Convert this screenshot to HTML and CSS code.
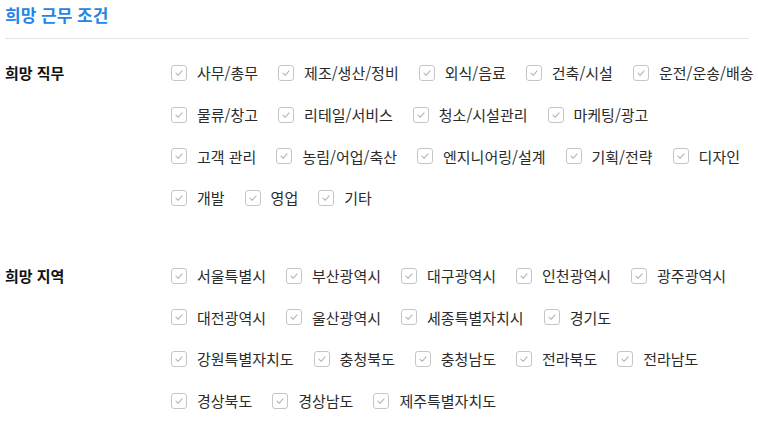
FILE: index.html
```html
<!DOCTYPE html>
<html lang="ko">
<head>
<meta charset="utf-8">
<link rel="stylesheet" href="styles.css">
</head>
<body>
<div class="page">
  <h2 class="title">희망 근무 조건</h2>
  <div class="divider"></div>

  <section class="field">
    <div class="label">희망 직무</div>
    <div class="options">
      <div class="row">
        <label class="opt"><span class="box"><svg viewBox="0 0 16 16"><polyline points="4.5,8.2 7,10.6 11.5,5.6"/></svg></span>사무/총무</label>
        <label class="opt"><span class="box"><svg viewBox="0 0 16 16"><polyline points="4.5,8.2 7,10.6 11.5,5.6"/></svg></span>제조/생산/정비</label>
        <label class="opt"><span class="box"><svg viewBox="0 0 16 16"><polyline points="4.5,8.2 7,10.6 11.5,5.6"/></svg></span>외식/음료</label>
        <label class="opt"><span class="box"><svg viewBox="0 0 16 16"><polyline points="4.5,8.2 7,10.6 11.5,5.6"/></svg></span>건축/시설</label>
        <label class="opt"><span class="box"><svg viewBox="0 0 16 16"><polyline points="4.5,8.2 7,10.6 11.5,5.6"/></svg></span>운전/운송/배송</label>
      </div>
      <div class="row">
        <label class="opt"><span class="box"><svg viewBox="0 0 16 16"><polyline points="4.5,8.2 7,10.6 11.5,5.6"/></svg></span>물류/창고</label>
        <label class="opt"><span class="box"><svg viewBox="0 0 16 16"><polyline points="4.5,8.2 7,10.6 11.5,5.6"/></svg></span>리테일/서비스</label>
        <label class="opt"><span class="box"><svg viewBox="0 0 16 16"><polyline points="4.5,8.2 7,10.6 11.5,5.6"/></svg></span>청소/시설관리</label>
        <label class="opt"><span class="box"><svg viewBox="0 0 16 16"><polyline points="4.5,8.2 7,10.6 11.5,5.6"/></svg></span>마케팅/광고</label>
      </div>
      <div class="row">
        <label class="opt"><span class="box"><svg viewBox="0 0 16 16"><polyline points="4.5,8.2 7,10.6 11.5,5.6"/></svg></span>고객 관리</label>
        <label class="opt"><span class="box"><svg viewBox="0 0 16 16"><polyline points="4.5,8.2 7,10.6 11.5,5.6"/></svg></span>농림/어업/축산</label>
        <label class="opt"><span class="box"><svg viewBox="0 0 16 16"><polyline points="4.5,8.2 7,10.6 11.5,5.6"/></svg></span>엔지니어링/설계</label>
        <label class="opt"><span class="box"><svg viewBox="0 0 16 16"><polyline points="4.5,8.2 7,10.6 11.5,5.6"/></svg></span>기획/전략</label>
        <label class="opt"><span class="box"><svg viewBox="0 0 16 16"><polyline points="4.5,8.2 7,10.6 11.5,5.6"/></svg></span>디자인</label>
      </div>
      <div class="row">
        <label class="opt"><span class="box"><svg viewBox="0 0 16 16"><polyline points="4.5,8.2 7,10.6 11.5,5.6"/></svg></span>개발</label>
        <label class="opt"><span class="box"><svg viewBox="0 0 16 16"><polyline points="4.5,8.2 7,10.6 11.5,5.6"/></svg></span>영업</label>
        <label class="opt"><span class="box"><svg viewBox="0 0 16 16"><polyline points="4.5,8.2 7,10.6 11.5,5.6"/></svg></span>기타</label>
      </div>
    </div>
  </section>

  <section class="field">
    <div class="label">희망 지역</div>
    <div class="options">
      <div class="row">
        <label class="opt"><span class="box"><svg viewBox="0 0 16 16"><polyline points="4.5,8.2 7,10.6 11.5,5.6"/></svg></span>서울특별시</label>
        <label class="opt"><span class="box"><svg viewBox="0 0 16 16"><polyline points="4.5,8.2 7,10.6 11.5,5.6"/></svg></span>부산광역시</label>
        <label class="opt"><span class="box"><svg viewBox="0 0 16 16"><polyline points="4.5,8.2 7,10.6 11.5,5.6"/></svg></span>대구광역시</label>
        <label class="opt"><span class="box"><svg viewBox="0 0 16 16"><polyline points="4.5,8.2 7,10.6 11.5,5.6"/></svg></span>인천광역시</label>
        <label class="opt"><span class="box"><svg viewBox="0 0 16 16"><polyline points="4.5,8.2 7,10.6 11.5,5.6"/></svg></span>광주광역시</label>
      </div>
      <div class="row">
        <label class="opt"><span class="box"><svg viewBox="0 0 16 16"><polyline points="4.5,8.2 7,10.6 11.5,5.6"/></svg></span>대전광역시</label>
        <label class="opt"><span class="box"><svg viewBox="0 0 16 16"><polyline points="4.5,8.2 7,10.6 11.5,5.6"/></svg></span>울산광역시</label>
        <label class="opt"><span class="box"><svg viewBox="0 0 16 16"><polyline points="4.5,8.2 7,10.6 11.5,5.6"/></svg></span>세종특별자치시</label>
        <label class="opt"><span class="box"><svg viewBox="0 0 16 16"><polyline points="4.5,8.2 7,10.6 11.5,5.6"/></svg></span>경기도</label>
      </div>
      <div class="row">
        <label class="opt"><span class="box"><svg viewBox="0 0 16 16"><polyline points="4.5,8.2 7,10.6 11.5,5.6"/></svg></span>강원특별자치도</label>
        <label class="opt"><span class="box"><svg viewBox="0 0 16 16"><polyline points="4.5,8.2 7,10.6 11.5,5.6"/></svg></span>충청북도</label>
        <label class="opt"><span class="box"><svg viewBox="0 0 16 16"><polyline points="4.5,8.2 7,10.6 11.5,5.6"/></svg></span>충청남도</label>
        <label class="opt"><span class="box"><svg viewBox="0 0 16 16"><polyline points="4.5,8.2 7,10.6 11.5,5.6"/></svg></span>전라북도</label>
        <label class="opt"><span class="box"><svg viewBox="0 0 16 16"><polyline points="4.5,8.2 7,10.6 11.5,5.6"/></svg></span>전라남도</label>
      </div>
      <div class="row">
        <label class="opt"><span class="box"><svg viewBox="0 0 16 16"><polyline points="4.5,8.2 7,10.6 11.5,5.6"/></svg></span>경상북도</label>
        <label class="opt"><span class="box"><svg viewBox="0 0 16 16"><polyline points="4.5,8.2 7,10.6 11.5,5.6"/></svg></span>경상남도</label>
        <label class="opt"><span class="box"><svg viewBox="0 0 16 16"><polyline points="4.5,8.2 7,10.6 11.5,5.6"/></svg></span>제주특별자치도</label>
      </div>
    </div>
  </section>
</div>
</body>
</html>
```

FILE: styles.css
```css
* { box-sizing: border-box; }
html, body { margin: 0; padding: 0; background: #fff; }
body {
  font-family: "Noto Sans CJK KR", "Noto Sans", sans-serif;
  color: #333;
}
.page {
  padding: 0 9px 0 5px;
}
.title {
  margin: 0;
  padding-top: 4px;
  height: 38px;
  font-size: 17px;
  line-height: 22px;
  font-weight: 700;
  color: #1f86e6;
}
.divider {
  height: 1px;
  background: #e5e5e5;
  margin-bottom: 13px;
}
.field {
  display: flex;
  margin-bottom: 36px;
}
.label {
  width: 166px;
  flex: none;
  height: 41.7px;
  line-height: 41.7px;
  font-size: 15px;
  font-weight: 700;
  color: #111;
}
.options {
  display: flex;
  flex-direction: column;
}
.row {
  display: flex;
  align-items: center;
  height: 41.7px;
  gap: 20px;
}
.opt {
  display: flex;
  align-items: center;
  font-size: 15px;
  color: #2b2b2b;
  white-space: nowrap;
}
.box {
  width: 16px;
  height: 16px;
  border: 1px solid #c6c6c6;
  border-radius: 3px;
  background: #fff;
  margin-right: 10px;
  display: flex;
  flex: none;
}
.box svg {
  width: 14px;
  height: 14px;
}
.box polyline {
  fill: none;
  stroke: #b4b4b4;
  stroke-width: 1.2;
  stroke-linecap: round;
  stroke-linejoin: round;
}
```
